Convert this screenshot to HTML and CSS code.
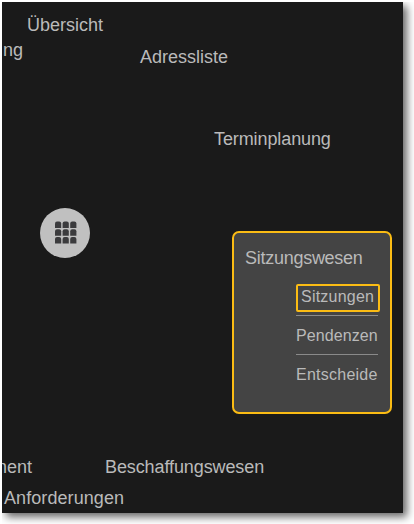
FILE: index.html
```html
<!DOCTYPE html>
<html lang="de">
<head>
<meta charset="utf-8">
<title>Übersicht</title>
<link rel="stylesheet" href="styles.css">
</head>
<body>
<main class="canvas">
  <span class="node uebersicht">Übersicht</span>
  <span class="node ng">ng</span>
  <span class="node adressliste">Adressliste</span>
  <span class="node termin">Terminplanung</span>
  <button class="hub" aria-label="Menü">
    <svg width="50" height="50" viewBox="0 0 50 50">
      <defs><path id="tile" d="M0 6.5V2Q0 0 2 0H4.2Q6.2 0 6.2 2V6.5Z"/></defs>
      <g fill="#3b3b3d">
        <use href="#tile" x="15" y="13.4"/><use href="#tile" x="22.6" y="13.4"/><use href="#tile" x="30.2" y="13.4"/>
        <use href="#tile" x="15" y="21.2"/><use href="#tile" x="22.6" y="21.2"/><use href="#tile" x="30.2" y="21.2"/>
        <use href="#tile" x="15" y="29"/><use href="#tile" x="22.6" y="29"/><use href="#tile" x="30.2" y="29"/>
      </g>
    </svg>
  </button>
  <section class="panel">
    <h2 class="title">Sitzungswesen</h2>
    <ul class="list">
      <li class="item active"><span class="mark">Sitzungen</span></li>
      <li class="item">Pendenzen</li>
      <li class="item">Entscheide</li>
    </ul>
  </section>
  <span class="node ment">ment</span>
  <span class="node beschaffung">Beschaffungswesen</span>
  <span class="node anforderungen">Anforderungen</span>
</main>
</body>
</html>
```

FILE: styles.css
```css
* { box-sizing: border-box; }
html { height: 100%; background: #fff; }
body {
  margin: 0;
  padding: 2px;
  height: 524px;
  font-family: "Liberation Sans", Arial, sans-serif;
  color: #bababa;
}
.canvas {
  position: relative;
  width: 401px;
  height: 511px;
  background: #1a1a1a;
  box-shadow: 4px 4px 8px rgba(0, 0, 0, .6);
  clip-path: inset(0 -11px -11px 0);
}
/* Labels sit freely around the hub */
.node {
  position: absolute;
  font-size: 18px;
  line-height: 20px;
  white-space: nowrap;
}
.uebersicht { left: 25px; top: 13px; }
.ng { left: 1px; top: 38px; }
.adressliste { left: 138px; top: 45px; }
.termin { left: 212px; top: 127px; letter-spacing: -.1px; }
.ment { right: 371px; top: 455px; }
.beschaffung { left: 103px; top: 455px; letter-spacing: -.1px; }
.anforderungen { left: 2px; top: 486px; letter-spacing: .08px; }
.hub {
  position: absolute;
  left: 38px;
  top: 206px;
  width: 50px;
  height: 50px;
  padding: 0;
  border: 0;
  border-radius: 50%;
  background: #c0c0c0;
}
.hub svg { display: block; }
.panel {
  position: absolute;
  left: 230px;
  top: 229px;
  width: 160px;
  height: 183px;
  padding: 15px 12px 0 11px;
  border: 2px solid #fbbc14;
  border-radius: 7px;
  background: #444;
}
.title {
  margin: 0 0 16px;
  font-size: 18px;
  font-weight: 400;
  line-height: 20px;
  letter-spacing: -.27px;
}
.list {
  width: 82px;
  margin: 0 0 0 auto;
  padding: 0;
  list-style: none;
  font-size: 16px;
  letter-spacing: .1px;
}
.item {
  height: 39px;
  padding-top: 11px;
  line-height: 18px;
  border-bottom: 1px solid #8a8a8a;
}
.item:last-child { border-bottom: 0; letter-spacing: .25px; }
.active { height: 32px; padding-top: 0; }
.mark {
  display: block;
  width: 84px;
  height: 28px;
  padding-left: 3px;
  border: 2px solid #fbbc14;
  border-radius: 2px;
  line-height: 22px;
  letter-spacing: .22px;
}
```
